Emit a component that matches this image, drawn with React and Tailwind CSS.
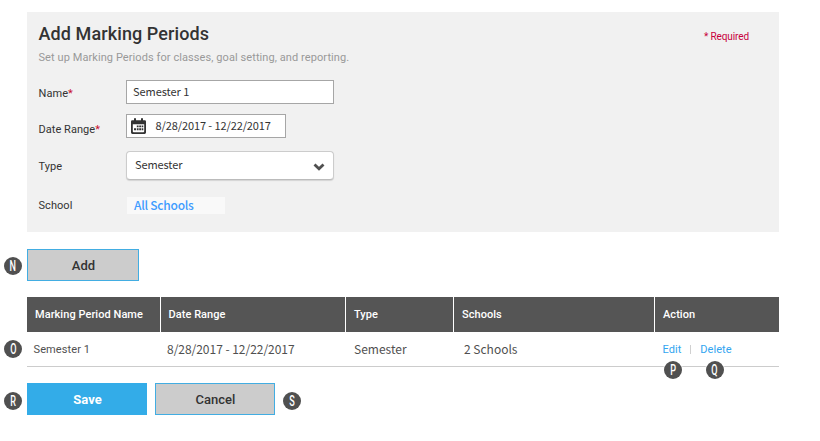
import React from "react";

const SOURCE = "font-['Noto_Sans_CJK_SC',sans-serif]";

function Marker({ children }) {
  return (
    <span className="flex h-[18px] w-[18px] shrink-0 items-center justify-center rounded-full bg-[#505050] text-white">
      <span className="block translate-y-[0.5px] scale-x-[0.7] scale-y-[1.06] text-[13px] leading-[18px] font-medium">{children}</span>
    </span>
  );
}

function Gutter({ children }) {
  return <div className="flex w-[27px] shrink-0 items-center pt-px pl-1">{children}</div>;
}

function Label({ children, required }) {
  return (
    <label className="block w-[88px] shrink-0 pl-[0.5px] text-[11px] leading-4 tracking-[0.05px] whitespace-nowrap text-[#333]">
      {children}
      {required && <span className="text-[#c8102e]">*</span>}
    </label>
  );
}

function CalendarIcon() {
  return (
    <svg width="15" height="16" viewBox="0 0 15 16" className="shrink-0">
      <path
        fill="#333"
        fillRule="evenodd"
        d="M1.200 2.200H3V1Q3 0 4 0t1 1v1.200h5V1q0-1 1-1t1 1v1.200h1.800Q15 2.200 15 3.400v11.200q0 1.400-1.400 1.400H1.400Q0 16 0 14.600V3.400Q0 2.200 1.200 2.200zM1.800 6.300v7q0 .9.900.9h9.600q.9 0 .9-.9v-7z"
      />
      <path
        fill="#333"
        d="M5.800 7.400h1.800v1.800H5.800zM8.200 7.400H10v1.800H8.200zM10.600 7.400h1.700v1.800h-1.700zM3 10.300h2v2H3zM5.800 10.300h1.800v2H5.800zM8.200 10.300H10v2H8.200zM10.600 10.300h1.700v2h-1.700z"
      />
    </svg>
  );
}

export default function App() {
  return (
    <div className="h-[441px] w-[820px] overflow-hidden bg-white pt-3 font-['Roboto',sans-serif] text-[#333]">
      <section className="ml-[27px] h-[220px] w-[752px] bg-[#f1f1f1] pl-[11px]">
        <header className="flex h-[68px] justify-between pr-[30px]">
          <div className="pt-2.5 pl-[0.5px]">
            <h1 className="text-[18px] leading-6 font-medium tracking-[0.1px] whitespace-nowrap">Add Marking Periods</h1>
            <p className="pt-1 text-[11px] leading-4 tracking-[0.08px] whitespace-nowrap text-[#999]">
              Set up Marking Periods for classes, goal setting, and reporting.
            </p>
          </div>
          <span className="pt-[17px] text-[10px] leading-4 tracking-[-0.1px] whitespace-nowrap text-[#c8003c]">* Required</span>
        </header>

        <div className="flex h-6 items-center">
          <div className="pt-1"><Label required>Name</Label></div>
          <div className="ml-auto w-[653px]">
            <div className={`${SOURCE} flex h-6 w-[208px] items-center border border-[#a6a6a6] bg-white pb-0.5 pl-1.5 text-[11px] leading-5 tracking-[-0.05px]`}>
              Semester 1
            </div>
          </div>
        </div>

        <div className="mt-2.5 flex h-6 items-center">
          <div className="pt-2"><Label required>Date Range</Label></div>
          <div className="ml-auto w-[653px]">
            <div className={`${SOURCE} flex h-6 w-[160px] items-center border border-[#a6a6a6] bg-white pl-1 text-[11px] leading-5 whitespace-nowrap`}>
              <CalendarIcon />
              <span className="pb-0.5 pl-[9.5px] tracking-[-0.1px]">8/28/2017 - 12/22/2017</span>
            </div>
          </div>
        </div>

        <div className="mt-[13px] flex h-[29px] items-center">
          <div className="pt-[3px]"><Label>Type</Label></div>
          <div className="ml-auto w-[653px]">
            <div className="flex h-[29px] w-[208px] items-center justify-between rounded border border-[#ccc] border-b-[#bbb] bg-white pr-2 pl-2 shadow-[0_1px_1px_rgba(0,0,0,0.12)]">
              <span className={`${SOURCE} pb-1 text-[11px] leading-5 tracking-[-0.1px]`}>Semester</span>
              <svg width="12" height="8" viewBox="0 0 12 8" className="mt-0.5">
                <path d="M1.500 1.500 6 5.800l4.500-4.300" fill="none" stroke="#505050" strokeWidth="2.800" />
              </svg>
            </div>
          </div>
        </div>

        <div className="mt-[17px] flex h-[17px] items-center">
          <Label>School</Label>
          <div className="ml-auto w-[652px]">
            <div className={`${SOURCE} h-[17px] w-[98px] bg-[#f9f9f9] pl-[7px] text-[12px] leading-4 font-medium tracking-[-0.25px] text-[#3f9cff]`}>
              All Schools
            </div>
          </div>
        </div>
      </section>

      <div className="mt-[17px] flex h-8">
        <Gutter><Marker>N</Marker></Gutter>
        <button className="w-28 border border-[#42ade2] bg-[#ccc] pt-px pl-px text-[13px] font-medium">Add</button>
      </div>

      <div className="mt-4 ml-[27px] grid h-[35px] w-[752px] grid-cols-[133px_184px_107px_200px_124px] gap-px text-[11px] font-medium tracking-[0.05px] text-white">
        <div className="flex items-center bg-[#555] pt-px pl-2 whitespace-nowrap">Marking Period Name</div>
        <div className="flex items-center bg-[#555] pt-px pl-[7.5px]">Date Range</div>
        <div className="flex items-center bg-[#555] pt-px pl-2">Type</div>
        <div className="flex items-center bg-[#555] pt-px pl-2">Schools</div>
        <div className="flex items-center bg-[#555] pt-px pl-2">Action</div>
      </div>

      <div className="flex h-[35px]">
        <div className="flex w-[27px] shrink-0 items-center pb-px pl-1"><Marker>O</Marker></div>
        <div className={`${SOURCE} grid w-[752px] grid-cols-[133px_184px_107px_200px_124px] items-center gap-px border-b border-[#ccc] text-[12px] leading-5 whitespace-nowrap text-[#505050]`}>
          <div className="pt-px pl-[6.5px] font-['Roboto',sans-serif] text-[11px] tracking-[0.1px]">Semester 1</div>
          <div className="pl-1.5 tracking-[-0.03px]">8/28/2017 - 12/22/2017</div>
          <div className="pl-2">Semester</div>
          <div className="pl-2.5">2 Schools</div>
          <div className="relative flex items-center pt-px pl-[7.5px] font-['Roboto',sans-serif] text-[11px] tracking-[0.05px] text-[#33a5f0]">
            <span>Edit</span>
            <span className="mr-[9px] ml-[9px] h-[9px] w-px bg-[#d0d0d0]" />
            <span>Delete</span>
            <span className="absolute top-[22px] left-[9px] rounded-full ring-1 ring-white"><Marker>P</Marker></span>
            <span className="absolute top-[22px] left-[51px] rounded-full ring-1 ring-white"><Marker>Q</Marker></span>
          </div>
        </div>
      </div>

      <div className="mt-4 flex h-8">
        <div className="flex w-[27px] shrink-0 items-center pt-[3px] pl-1"><Marker>R</Marker></div>
        <button className="w-[120px] bg-[#33ace8] pt-px pl-px text-[13px] font-bold text-white">Save</button>
        <button className="ml-2 w-[120px] border border-[#42ade2] bg-[#ccc] pt-px pl-px text-[13px] font-medium">Cancel</button>
        <div className="flex items-center pt-[3px] pl-2"><Marker>S</Marker></div>
      </div>
    </div>
  );
}
